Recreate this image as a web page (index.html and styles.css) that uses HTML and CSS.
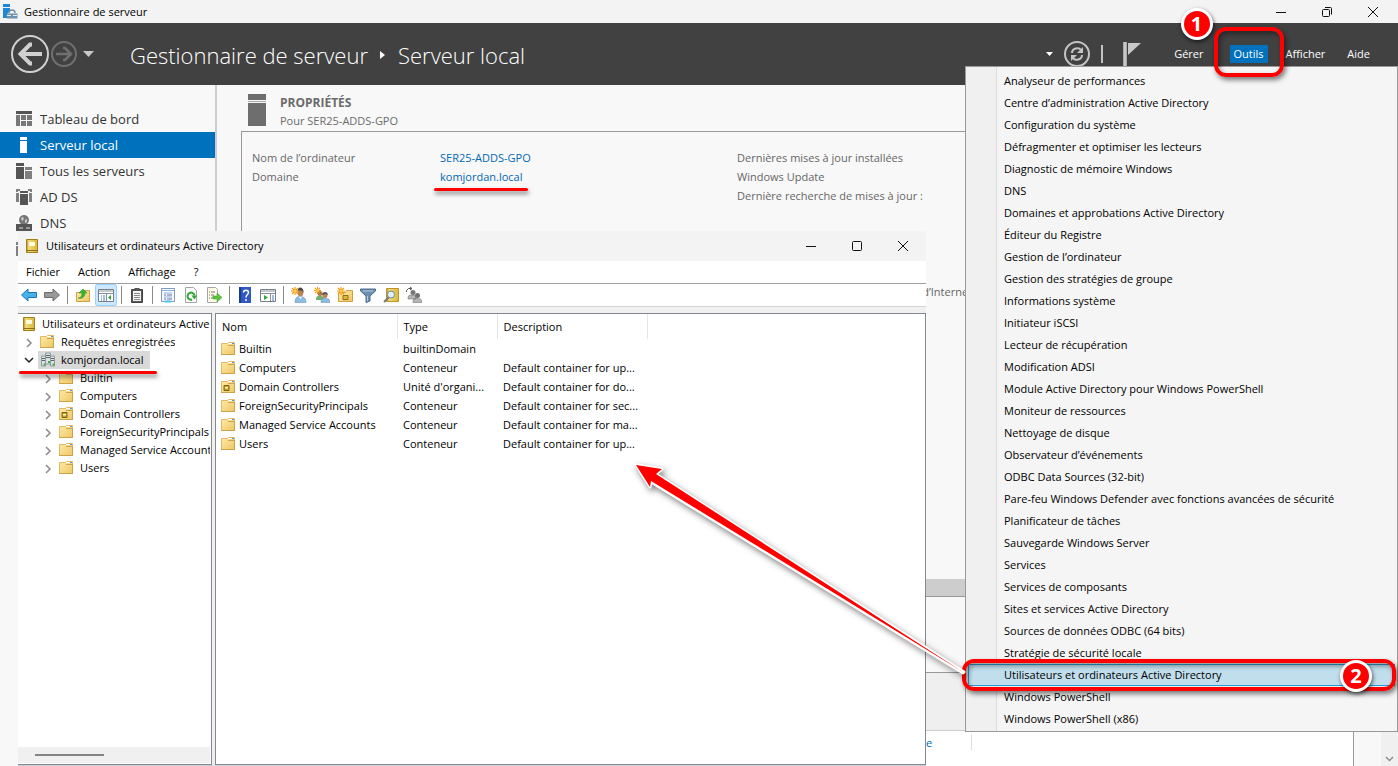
FILE: index.html
```html
<!DOCTYPE html>
<html lang="fr">
<head>
    <meta charset="UTF-8">
    <meta name="viewport" content="width=device-width, initial-scale=1.0">
    <title>Gestionnaire de serveur</title>
    <link rel="stylesheet" href="styles.css">
</head>
<body>
    <!-- Icônes partagées -->
    <svg class="defs" width="0" height="0">
        <defs>
            <linearGradient id="gold" x1="0" y1="0" x2="1" y2="1">
                <stop offset="0" stop-color="#ffeaa8"/>
                <stop offset="1" stop-color="#eec765"/>
            </linearGradient>
            <linearGradient id="book" x1="0" y1="0" x2="1" y2="0">
                <stop offset="0" stop-color="#b08a1c"/>
                <stop offset=".2" stop-color="#f3dc7c"/>
                <stop offset="1" stop-color="#d9b63c"/>
            </linearGradient>
            <symbol id="i-folder" viewBox="0 0 16 16">
                <path d="M.5 2.500h6l1-1h6v12H.5z" fill="url(#gold)" stroke="#e0b966"/>
                <path d="M7 2.500h6" stroke="#fff"/>
                <path d="M11 2.500h2" stroke="#4a9be0"/>
                <path d="M7 4.500h7M0 13.500h14M13.500 4v10" stroke="#cda24c"/>
            </symbol>
            <symbol id="i-ou" viewBox="0 0 16 16">
                <use href="#i-folder"/>
                <path d="M3 6.500h5v5H3z" fill="#c9a227" stroke="#7d6414"/>
                <path d="M4 8h3v1.500H4z" fill="#fff6c4"/>
            </symbol>
            <symbol id="i-book" viewBox="0 0 16 16">
                <path d="M2.500 1.500h11v13h-11z" fill="url(#book)" stroke="#a37f1b"/>
                <path d="M5 4h6v4H5z" fill="#fffbe0"/>
                <path d="M3 12.500h11" stroke="#8d6c12" stroke-width="1"/>
            </symbol>
            <symbol id="i-domain" viewBox="0 0 16 16">
                <path d="M5.500 1h5v11h-5z" fill="#dbe3e5" stroke="#8d999d"/>
                <path d="M1.500 4h4v10h-4zM10.500 4h4v10h-4z" fill="#dbe3e5" stroke="#8d999d"/>
                <path d="M6 3.500h4M6 5.500h4M2 6.500h3M11 6.500h3M2 8.500h3M11 8.500h3" stroke="#59656a"/>
                <path d="M8 9h2v2H8zM3.500 11.500h2v2h-2zM12.500 11.500h2v2h-2z" fill="#3fb34a"/>
            </symbol>
            <symbol id="i-chev" viewBox="0 0 16 16">
                <path d="M6 5l4 4-4 4" fill="none" stroke="#8a8a8a" stroke-width="1.500"/>
            </symbol>
            <symbol id="i-star" viewBox="0 0 8 8">
                <path d="M4 0v8M0 4h8M1 1l6 6M7 1L1 7" stroke="#f09a12" stroke-width="1.200"/>
                <circle cx="4" cy="4" r="1.500" fill="#ffd45c"/>
            </symbol>
        </defs>
    </svg>

    <div class="app">
        <div class="titlebar">
            <svg class="icon" viewBox="0 0 16 16">
                <path d="M1 0h7v3H1z" fill="#1d86d6"/>
                <path d="M1 4h7v3L5 10v4H1z" fill="#1d86d6"/>
                <path d="M4.500 9.500h11v5h-11z" fill="#6f92ac"/>
                <path d="M7 9c0-4 6-4 6 0" fill="none" stroke="#6f92ac" stroke-width="1.500"/>
                <path d="M5 11.500h4M11 11.500h4" stroke="#e6eef4"/>
            </svg>
            <span>Gestionnaire de serveur</span>
            <div class="controls">
                <button aria-label="Réduire"><svg viewBox="0 0 12 12"><path d="M1 6.500h10"/></svg></button>
                <button aria-label="Restaurer"><svg viewBox="0 0 12 12"><rect x="1.500" y="3.500" width="7" height="7" rx="1"/><path d="M4 1.500h5.500a1 1 0 0 1 1 1V8.500"/></svg></button>
                <button aria-label="Fermer"><svg viewBox="0 0 12 12"><path d="M1 1l10 10M11 1L1 11"/></svg></button>
            </div>
        </div>

        <header class="banner">
            <div class="history">
                <button aria-label="Précédent"><svg width="38" height="38" viewBox="0 0 38 38"><circle cx="19" cy="19" r="18" fill="none" stroke="#d0d0d0" stroke-width="2"/><path d="M31 19H10M21 9.500h-2L9.500 19l9.500 9.500h2" fill="none" stroke="#d0d0d0" stroke-width="4"/></svg></button>
                <button aria-label="Suivant"><svg width="26" height="26" viewBox="0 0 26 26"><circle cx="13" cy="13" r="12" fill="none" stroke="#707070" stroke-width="2"/><path d="M5 13h14M12 7h2l6 6-6 6h-2" fill="none" stroke="#707070" stroke-width="2.500"/></svg></button>
                <button class="drop" aria-label="Historique"><svg width="11" height="6" viewBox="0 0 11 6"><path d="M0 0h11L5.500 6z" fill="#c8c8c8"/></svg></button>
            </div>
            <h1>Gestionnaire de serveur <svg width="6" height="10" viewBox="0 0 6 10"><path d="M0 1v8l5-4z" fill="#fff"/></svg> Serveur local</h1>
            <div class="tools">
                <svg width="7" height="4" viewBox="0 0 7 4"><path d="M0 0h7L3.500 4z" fill="#fff"/></svg>
                <button aria-label="Actualiser"><svg width="26" height="26" viewBox="0 0 26 26"><circle cx="13" cy="13" r="12" fill="none" stroke="#c4c4c4" stroke-width="2"/><path d="M8 12c0-5 7-6 9-3M18 14c0 5-7 6-9 3" fill="none" stroke="#c4c4c4" stroke-width="2"/><path d="M19 6v6h-6zM7 20v-6h6z" fill="#c4c4c4"/></svg></button>
                <span class="bar"></span>
                <button aria-label="Notifications"><svg width="18" height="24" viewBox="0 0 18 24"><path d="M0 0h4v24H0z" fill="#a8a8a8"/><path d="M1 0h2v24H1z" fill="#c8c8c8"/><path d="M5 1h13L5 13z" fill="#c8c8c8"/></svg></button>
            </div>
            <nav class="menubar">
                <button>Gérer</button>
                <button class="open">Outils<span class="mark"></span><span class="badge">1</span></button>
                <button>Afficher</button>
                <button>Aide</button>
            </nav>
        </header>

        <div class="body">
            <nav class="sidebar">
                <a href="#"><svg viewBox="0 0 16 16"><path d="M0 0h16v3H0z" fill="#555"/><path d="M0 4h4v11H0zM5 4h5v5H5zM11 4h5v5h-5zM5 10h5v5H5zM11 10h5v5h-5z" fill="#777"/></svg>Tableau de bord</a>
                <a href="#" class="active"><svg viewBox="0 0 16 16"><path d="M4 0h7v3H4zM4 4h7v12H4z" fill="#fff"/></svg>Serveur local</a>
                <a href="#"><svg viewBox="0 0 16 16"><path d="M0 0h8v3H0zM0 4h8v12H0z" fill="#555"/><path d="M9 4h7v3H9zM9 8h7v8H9z" fill="#808080"/></svg>Tous les serveurs</a>
                <a href="#"><svg viewBox="0 0 16 16"><path d="M0 0h4v2H2v1H0zM0 4h3v9H0zM12 0h4v3h-2V2h-2zM13 4h3v9h-3z" fill="#808080"/><path d="M4 2h8v2H4zM4 5h8v11H4z" fill="#555"/></svg>AD DS</a>
                <a href="#"><svg viewBox="0 0 16 16"><circle cx="8" cy="5" r="5" fill="#777"/><path d="M5 3l2-1 1 2-2 2zM9 5l2-1v3l-2 1z" fill="#ccc"/><path d="M0 9h16v3H0zM0 12h16v4H0z" fill="#555"/><path d="M3 13h4M10 13h4" stroke="#ddd"/></svg>DNS</a>
                <a href="#" aria-label="Services de fichiers"><svg viewBox="0 0 16 16"><path d="M0 1h7v3H0zM0 5h7v10H0z" fill="#808080"/></svg></a>
            </nav>

            <main class="content">
                <div class="heading">
                    <svg width="18" height="32" viewBox="0 0 18 32"><path d="M0 0h18v6H0zM0 9h18v23H0z" fill="#6e6e6e"/><path d="M0 7.500h18" stroke="#a8a8a8"/></svg>
                    <div>
                        <h2>PROPRIÉTÉS</h2>
                        <p>Pour SER25-ADDS-GPO</p>
                    </div>
                </div>
                <section class="properties">
                    <dl>
                        <dt>Nom de l’ordinateur</dt><dd><a href="#">SER25-ADDS-GPO</a></dd>
                        <dt>Domaine</dt><dd><a href="#" class="underlined">komjordan.local</a></dd>
                    </dl>
                    <div class="updates">
                        <p>Dernières mises à jour installées</p>
                        <p>Windows Update</p>
                        <p>Dernière recherche de mises à jour :</p>
                        <p class="group">Configuration de sécurité renforcée d’Internet Explorer</p>
                    </div>
                    <div class="hscroll"></div>
                </section>
                <div class="spacer"></div>
                <section class="events">
                    <div class="filters"></div>
                    <div class="rows"><a href="#">e</a></div>
                </section>
            </main>
            <div class="vscroll"><svg width="9" height="6" viewBox="0 0 9 6"><path d="M1 1l3.500 3.500L8 1" fill="none" stroke="#909090" stroke-width="1.500"/></svg></div>
        </div>

        <!-- Menu Outils -->
        <ul class="dropdown">
            <li><button>Analyseur de performances</button></li>
            <li><button>Centre d’administration Active Directory</button></li>
            <li><button>Configuration du système</button></li>
            <li><button>Défragmenter et optimiser les lecteurs</button></li>
            <li><button>Diagnostic de mémoire Windows</button></li>
            <li><button>DNS</button></li>
            <li><button>Domaines et approbations Active Directory</button></li>
            <li><button>Éditeur du Registre</button></li>
            <li><button>Gestion de l’ordinateur</button></li>
            <li><button>Gestion des stratégies de groupe</button></li>
            <li><button>Informations système</button></li>
            <li><button>Initiateur iSCSI</button></li>
            <li><button>Lecteur de récupération</button></li>
            <li><button>Modification ADSI</button></li>
            <li><button>Module Active Directory pour Windows PowerShell</button></li>
            <li><button>Moniteur de ressources</button></li>
            <li><button>Nettoyage de disque</button></li>
            <li><button>Observateur d’événements</button></li>
            <li><button>ODBC Data Sources (32-bit)</button></li>
            <li><button>Pare-feu Windows Defender avec fonctions avancées de sécurité</button></li>
            <li><button>Planificateur de tâches</button></li>
            <li><button>Sauvegarde Windows Server</button></li>
            <li><button>Services</button></li>
            <li><button>Services de composants</button></li>
            <li><button>Sites et services Active Directory</button></li>
            <li><button>Sources de données ODBC (64 bits)</button></li>
            <li><button>Stratégie de sécurité locale</button></li>
            <li class="selected"><button>Utilisateurs et ordinateurs Active Directory</button><span class="mark"></span><span class="badge">2</span></li>
            <li><button>Windows PowerShell</button></li>
            <li><button>Windows PowerShell (x86)</button></li>
        </ul>

        <!-- Fenêtre Utilisateurs et ordinateurs -->
        <div class="window">
            <div class="titlebar">
                <svg class="icon"><use href="#i-book"/></svg>
                <span>Utilisateurs et ordinateurs Active Directory</span>
                <div class="controls">
                    <button aria-label="Réduire"><svg viewBox="0 0 12 12"><path d="M1 6.500h10"/></svg></button>
                    <button aria-label="Agrandir"><svg viewBox="0 0 12 12"><rect x="1.500" y="1.500" width="9" height="9" rx="1"/></svg></button>
                    <button aria-label="Fermer"><svg viewBox="0 0 12 12"><path d="M1 1l10 10M11 1L1 11"/></svg></button>
                </div>
            </div>
            <nav class="winmenu">
                <button>Fichier</button>
                <button>Action</button>
                <button>Affichage</button>
                <button>?</button>
            </nav>
            <div class="toolbar">
                <button aria-label="Précédent"><svg viewBox="0 0 16 16"><path d="M.5 8L7 2v3.500h8.500v5H7V14z" fill="#45b2ea" stroke="#1b77b8"/></svg></button>
                <button aria-label="Suivant"><svg viewBox="0 0 16 16"><path d="M15.500 8L9 2v3.500H.5v5H9V14z" fill="#999" stroke="#6b6b6b"/></svg></button>
                <span class="sep"></span>
                <button aria-label="Dossier parent"><svg viewBox="0 0 16 16"><path d="M1.500 5.500h5l1-2h7v11h-13z" fill="url(#gold)" stroke="#cfa044"/><path d="M3 11c3 0 4-2 4-5H4l4-4 4 4h-2c0 4-3 6-7 5z" fill="#35b534" stroke="#1f8a24" stroke-width=".5"/></svg></button>
                <button class="on" aria-label="Arborescence"><svg viewBox="0 0 16 16"><path d="M.5 2.500h15v12H.5z" fill="#fff" stroke="#7a7f86"/><path d="M1 4h14M1 6.500h14" stroke="#8a9098"/><path d="M8.500 7v7" stroke="#8a9098"/><path d="M3 9h1M3 11h1M3 13h1M5 9h2M5 11h2M5 13h2" stroke="#3c7dc4"/><path d="M13 8v5l-3-2.500z" fill="#2fa834"/></svg></button>
                <span class="sep"></span>
                <button aria-label="Presse-papiers"><svg viewBox="0 0 16 16"><path d="M2.500 2.500h11v13h-11z" fill="#555" stroke="#444"/><path d="M4 4h8v10H4z" fill="#f4f4f4"/><path d="M5.500 1h5v3h-5z" fill="#555"/><path d="M5 6.500h6M5 8.500h6M5 10.500h6M5 12.500h6" stroke="#888"/></svg></button>
                <span class="sep"></span>
                <button aria-label="Propriétés"><svg viewBox="0 0 16 16"><path d="M1.500 1.500h13v13h-13z" fill="#f5f9fd" stroke="#7f9db9"/><path d="M2 3.500h12M4 6h8M4 10h8" stroke="#8fb3d9"/><path d="M4 8h2M7 8h5M4 12h2M7 12h5" stroke="#66a"/><path d="M5 14.500h6" stroke="#3fc4f0" stroke-width="2"/></svg></button>
                <button aria-label="Actualiser"><svg viewBox="0 0 16 16"><path d="M2.500.5h8l3 3v12h-11z" fill="#fafafa" stroke="#a6a6a6"/><path d="M9 12.500a3.500 3.500 0 1 1 2.500-4" fill="none" stroke="#2fa834" stroke-width="2"/><path d="M8.500 8.500h5.500l-2.500 4z" fill="#2fa834"/></svg></button>
                <button aria-label="Exporter"><svg viewBox="0 0 16 16"><path d="M1.500.5h8l2 2v13h-10z" fill="#fffbe6" stroke="#a6a6a6"/><path d="M3 5h6M3 8h5M3 11h5" stroke="#777" stroke-dasharray="1 1 4"/><path d="M7 9h4V6l5 4.500L11 15v-3H7z" fill="#5ac43c" stroke="#3a9c28" stroke-width=".5"/></svg></button>
                <span class="sep"></span>
                <button aria-label="Aide"><svg viewBox="0 0 16 16"><path d="M2 0h12v16H2z" fill="#2f58c4"/><path d="M2 0h2v16H2z" fill="#1c3a90"/><path d="M6.500 5.500c0-3 5-3 5 0 0 2-2.500 2-2.500 5M9 12v2" fill="none" stroke="#fff" stroke-width="1.500"/></svg></button>
                <button aria-label="Volet Actions"><svg viewBox="0 0 16 16"><path d="M.5 2.500h15v12H.5z" fill="#fff" stroke="#7a7f86"/><path d="M1 4h14M1 6.500h14M10.500 7v7" stroke="#8a9098"/><path d="M12 9h2M12 11h2M12 13h2" stroke="#3c7dc4"/><path d="M4 8v5l4-2.500z" fill="#2fa834"/></svg></button>
                <span class="sep"></span>
                <button aria-label="Nouvel utilisateur"><svg viewBox="0 0 16 16"><path d="M4 15.500c0-5 2-6 5-6 4 0 6 2 6 6z" fill="#8dbce0" stroke="#5c8db8" stroke-width=".5"/><path d="M8 9.500l1.500 3L11 9.500z" fill="#fff"/><ellipse cx="9.500" cy="5.500" rx="2.800" ry="4" fill="#b98455"/><path d="M6.500 5C6-1 13-1 12.500 6L11 3.500H8z" fill="#444"/><use href="#i-star" width="8" height="8"/></svg></button>
                <button aria-label="Nouveau groupe"><svg viewBox="0 0 16 16"><path d="M2 13c0-4 1-4 4-4 3 0 4 1 4 4z" fill="#6fb06c"/><circle cx="6" cy="6.500" r="2.500" fill="#a97748"/><path d="M7 15.500c0-4 1-4 4-4 4 0 5 1 5 4z" fill="#8dbce0" stroke="#5c8db8" stroke-width=".5"/><circle cx="11" cy="8.500" r="2.500" fill="#b98455"/><path d="M8 8c0-4 6-4 6 0l-2-1z" fill="#555"/><use href="#i-star" width="7" height="7"/></svg></button>
                <button aria-label="Nouvelle unité"><svg viewBox="0 0 16 16"><path d="M1.500 5.500h7l1-2h6v11h-14z" fill="url(#gold)" stroke="#cfa044"/><path d="M6 8.500h5v4H6z" fill="#e0b840" stroke="#8d6c12"/><use href="#i-star" width="8" height="8"/></svg></button>
                <button aria-label="Filtrer"><svg viewBox="0 0 16 16"><path d="M.5 2h15v2L10 9v5l-4 1.500V9L.5 4z" fill="#6c8fae" stroke="#4b6c8c"/><path d="M3 4h10" stroke="#b9cfe2"/><path d="M7.500 9v5" stroke="#b9cfe2"/></svg></button>
                <button aria-label="Rechercher"><svg viewBox="0 0 16 16"><path d="M3.500 1.500h12v13h-12z" fill="url(#book)" stroke="#b8962a"/><path d="M6 10l-5 5" stroke="#777" stroke-width="2"/><circle cx="8" cy="7.500" r="3.500" fill="#dff0fb" stroke="#6f8799"/></svg></button>
                <button aria-label="Ajouter au groupe"><svg viewBox="0 0 16 16"><path d="M2 12c0-4 1-4 4-4 3 0 4 1 4 4zM7 15.500c0-4 1-4 4-4 4 0 5 1 5 4z" fill="#b5b5b5" stroke="#666" stroke-width=".5"/><circle cx="7" cy="5.500" r="2.500" fill="#777"/><circle cx="11.500" cy="8.500" r="2.500" fill="#707070"/><path d="M.5 5V3.500l2-2h3M4 0l2 1.500L4 3" fill="none" stroke="#555"/></svg></button>
            </div>

            <div class="panes">
                <div class="tree">
                    <ul>
                        <li><svg><use href="#i-book"/></svg><span>Utilisateurs et ordinateurs Active Directory</span></li>
                        <li><svg><use href="#i-chev"/></svg><svg><use href="#i-folder"/></svg><span>Requêtes enregistrées</span></li>
                        <li class="current"><svg viewBox="0 0 16 16"><path d="M4 6l4 4 4-4" fill="none" stroke="#222" stroke-width="1.500"/></svg><div class="pick"><svg><use href="#i-domain"/></svg><span>komjordan.local</span></div></li>
                        <li class="child"><svg><use href="#i-chev"/></svg><svg><use href="#i-folder"/></svg><span>Builtin</span></li>
                        <li class="child"><svg><use href="#i-chev"/></svg><svg><use href="#i-folder"/></svg><span>Computers</span></li>
                        <li class="child"><svg><use href="#i-chev"/></svg><svg><use href="#i-ou"/></svg><span>Domain Controllers</span></li>
                        <li class="child"><svg><use href="#i-chev"/></svg><svg><use href="#i-folder"/></svg><span>ForeignSecurityPrincipals</span></li>
                        <li class="child"><svg><use href="#i-chev"/></svg><svg><use href="#i-folder"/></svg><span>Managed Service Accounts</span></li>
                        <li class="child"><svg><use href="#i-chev"/></svg><svg><use href="#i-folder"/></svg><span>Users</span></li>
                    </ul>
                    <div class="track"><div class="thumb"></div></div>
                </div>
                <div class="list">
                    <table>
                        <thead>
                            <tr><th class="name">Nom</th><th class="type">Type</th><th class="desc">Description</th></tr>
                        </thead>
                        <tbody>
                            <tr><td><svg><use href="#i-folder"/></svg>Builtin</td><td>builtinDomain</td><td></td></tr>
                            <tr><td><svg><use href="#i-folder"/></svg>Computers</td><td>Conteneur</td><td>Default container for up...</td></tr>
                            <tr><td><svg><use href="#i-ou"/></svg>Domain Controllers</td><td>Unité d'organi...</td><td>Default container for do...</td></tr>
                            <tr><td><svg><use href="#i-folder"/></svg>ForeignSecurityPrincipals</td><td>Conteneur</td><td>Default container for sec...</td></tr>
                            <tr><td><svg><use href="#i-folder"/></svg>Managed Service Accounts</td><td>Conteneur</td><td>Default container for ma...</td></tr>
                            <tr><td><svg><use href="#i-folder"/></svg>Users</td><td>Conteneur</td><td>Default container for up...</td></tr>
                        </tbody>
                    </table>
                </div>
            </div>
        </div>

        <svg class="arrow" width="340" height="230" viewBox="0 0 340 230">
            <path d="M6 5L32 9L26 14L334 212L333 213L21 22L20 27z" fill="#fff" stroke="#fff" stroke-width="3" stroke-linejoin="round"/>
            <path d="M6 5L32 9L26 14L333 212L21 21L20 27z" fill="#f00"/>
        </svg>
    </div>
</body>
</html>
```
FILE: styles.css
```css
* {
    box-sizing: border-box;
}
body {
    margin: 0;
    font-family: "Open Sans", "Noto Sans", sans-serif;
    font-size: 11px;
    line-height: 18px;
    color: #000;
}
h1, h2, p, ul, dl, dd {
    margin: 0;
    padding: 0;
}
ul {
    list-style: none;
}
a {
    color: #0068b5;
    text-decoration: none;
}
button {
    padding: 0;
    border: 0;
    background: none;
    font: inherit;
    color: inherit;
    white-space: nowrap;
}
svg {
    display: block;
    flex: none;
}
.defs {
    position: absolute;
}
.app {
    position: relative;
    height: 100vh;
    display: flex;
    flex-direction: column;
    overflow: hidden;
    background: #f8f8f8;
}

/* barre de titre */
.titlebar {
    display: flex;
    align-items: center;
    height: 23px;
    padding-left: 2px;
    background: #f3f3f3;
}
.titlebar .icon {
    width: 16px;
    height: 16px;
    margin-right: 6px;
}
.controls {
    display: flex;
    margin-left: auto;
    padding-right: 2px;
}
.controls button {
    width: 46px;
    display: flex;
    justify-content: center;
}
.controls svg {
    width: 12px;
    height: 12px;
    fill: none;
    stroke: #111;
}

/* bandeau */
.banner {
    display: flex;
    align-items: center;
    height: 62px;
    flex: none;
    padding: 0 24px 0 11px;
    background: #414141;
    color: #fff;
}
.history {
    display: flex;
    align-items: center;
    gap: 2px;
    width: 119px;
}
.history .drop {
    margin-left: 4px;
}
h1 {
    display: flex;
    align-items: center;
    gap: 12px;
    padding-top: 2px;
    font-size: 22px;
    font-weight: 300;
    line-height: 32px;
    white-space: nowrap;
}
.tools {
    display: flex;
    align-items: center;
    gap: 11px;
    margin-left: auto;
}
.tools .bar {
    width: 2px;
    height: 18px;
    background: #c4c4c4;
}
.tools button:last-child {
    margin-left: 9px;
}
.menubar {
    display: flex;
    gap: 14px;
    margin-left: 29px;
}
.menubar button {
    position: relative;
    padding: 0 4px;
}
.menubar .open {
    margin-left: 8px;
    background: #0071bc;
}

/* repères rouges */
.mark {
    position: absolute;
    z-index: 20;
    border: 4px solid #f00;
    border-radius: 12px;
    box-shadow: 2px 3px 5px rgba(0, 0, 0, .5), inset 2px 3px 5px rgba(0, 0, 0, .4);
}
.open .mark {
    inset: -18px -16px -14px;
}
.badge {
    position: absolute;
    z-index: 21;
    width: 32px;
    height: 32px;
    border: 3px solid #fff;
    border-radius: 50%;
    background: #f00;
    box-shadow: 1px 2px 4px rgba(0, 0, 0, .6);
    color: #fff;
    font-size: 20px;
    font-weight: 700;
    line-height: 26px;
    text-align: center;
}
.open .badge {
    left: -49px;
    top: -37px;
}
.arrow {
    position: absolute;
    z-index: 15;
    right: 428px;
    top: 460px;
    filter: drop-shadow(2px 3px 3px rgba(0, 0, 0, .5));
}
.underlined, .current {
    position: relative;
}
.underlined::after, .current::after {
    content: "";
    position: absolute;
    height: 3px;
    border-radius: 2px;
    background: #f00;
    box-shadow: 1px 3px 4px rgba(0, 0, 0, .5);
}
.underlined::after {
    left: -6px;
    right: -5px;
    bottom: -7px;
}
.current::after {
    left: 1px;
    width: 138px;
    bottom: -5px;
}

/* corps */
.body {
    flex: 1;
    display: flex;
    min-height: 0;
}
.sidebar {
    width: 217px;
    flex: none;
    padding-top: 21px;
    border-right: 2px solid #cdcdcd;
    overflow: hidden;
}
.sidebar a {
    display: flex;
    align-items: center;
    gap: 8px;
    height: 26px;
    padding-left: 16px;
    font-size: 13px;
    line-height: 26px;
    color: #333;
    white-space: nowrap;
}
.sidebar svg {
    width: 16px;
    height: 16px;
}
.sidebar .active {
    background: #0071bc;
    color: #fff;
}
.content {
    flex: 1;
    display: flex;
    flex-direction: column;
    min-width: 0;
    padding: 9px 27px 0 24px;
}
.heading {
    display: flex;
    gap: 14px;
    height: 37px;
    padding-left: 7px;
    color: #6b6b6b;
}
.heading h2 {
    font-size: 12px;
    line-height: 18px;
}
.properties {
    display: grid;
    grid-template-columns: 485px 1fr;
    grid-template-rows: 1fr 17px;
    height: 466px;
    flex: none;
    border: 1px solid #999;
    color: #666;
    line-height: 19px;
}
.properties dl {
    display: grid;
    grid-template-columns: 188px 1fr;
    align-content: start;
    padding: 16px 0 0 10px;
}
.updates {
    padding: 16px 0 0 10px;
    white-space: nowrap;
    overflow: hidden;
}
.updates .group {
    margin-top: 77px;
}
.hscroll {
    grid-column: 1 / 3;
    background: #cdcdcd;
}
.spacer {
    height: 75px;
    flex: none;
}
.events {
    flex: 1;
    display: flex;
    flex-direction: column;
    border: 1px solid #999;
    border-bottom: 0;
}
.filters {
    height: 58px;
    background: #efefef;
    border-bottom: 1px solid #ccc;
}
.rows {
    flex: 1;
    padding-top: 3px;
    background: #fff;
}
.rows a {
    display: block;
    width: 730px;
    height: 16px;
    padding-left: 684px;
    border-right: 1px solid #ddd;
}
.vscroll {
    width: 17px;
    display: flex;
    align-items: flex-end;
    justify-content: center;
    padding-bottom: 4px;
    background: #f0f0f0;
}

/* menu déroulant */
.dropdown {
    position: absolute;
    z-index: 10;
    top: 66px;
    right: 0;
    width: 433px;
    padding: 3px 2px 1px;
    border: 1px solid #999;
    background: linear-gradient(90deg, #f0f0f0 30px, #ddd 30px, #ddd 31px, #f5f5f5 31px);
}
.dropdown li {
    position: relative;
    height: 22px;
}
.dropdown button {
    width: 100%;
    height: 22px;
    padding-left: 36px;
    text-align: left;
}
.dropdown .selected {
    border: 1px solid #26a0da;
    background: #c0deec;
}
.dropdown .selected button {
    height: 20px;
    padding-left: 35px;
}
.selected .mark {
    inset: -6px -2px -6px -7px;
}
.selected .badge {
    right: 22px;
    top: -5px;
}

/* fenêtre */
.window {
    position: absolute;
    left: 18px;
    right: 472px;
    top: 231px;
    bottom: 1px;
    display: flex;
    flex-direction: column;
    background: #f0f0f0;
    box-shadow: 0 1px 0 #ccd3da;
}
.window .titlebar {
    height: 30px;
    padding-left: 6px;
}
.window .controls {
    padding: 0;
}
.winmenu {
    display: flex;
    gap: 18px;
    height: 22px;
    padding-left: 8px;
    background: #fff;
}
.toolbar {
    display: flex;
    align-items: center;
    gap: 1px;
    height: 24px;
    border-top: 1px solid #a0a0a0;
    border-bottom: 1px solid #d4d4d4;
    background: #fff;
}
.toolbar button {
    width: 22px;
    height: 22px;
    padding: 3px;
}
.toolbar svg {
    width: 16px;
    height: 16px;
}
.toolbar .on {
    border-radius: 3px;
    background: #cce8ff;
    box-shadow: inset 0 0 0 1px #99d1ff;
}
.toolbar .sep {
    width: 1px;
    height: 18px;
    margin: 0 3px;
    background: #8a8a8a;
}
.panes {
    flex: 1;
    display: flex;
    gap: 3px;
    min-height: 0;
    padding-top: 6px;
}
.tree {
    width: 194px;
    display: flex;
    flex-direction: column;
    border: 1px solid #828790;
    border-left: 0;
    background: #fff;
}
.tree ul {
    flex: 1;
    padding: 1px 1px 0 0;
}
.tree li {
    display: flex;
    align-items: center;
    gap: 3px;
    height: 18px;
    padding-left: 3px;
    white-space: nowrap;
}
.tree li > span {
    overflow: hidden;
    margin-left: 2px;
}
.tree svg {
    width: 16px;
    height: 16px;
}
.tree .child {
    padding-left: 22px;
}
.pick {
    display: flex;
    align-items: center;
    gap: 5px;
    padding: 0 6px 0 2px;
    margin-left: -2px;
    background: #d9d9d9;
}
.track {
    height: 16px;
    margin: 0 1px 1px 0;
    padding: 7px 17px;
    background: #f0f0f0;
}
.thumb {
    width: 69px;
    height: 2px;
    background: #858585;
}
.list {
    flex: 1;
    min-width: 0;
    border: 1px solid #828790;
    background: #fff;
}
table {
    width: 431px;
    table-layout: fixed;
    border-collapse: collapse;
}
.name {
    width: 181px;
}
.type {
    width: 100px;
}
.desc {
    width: 150px;
}
th {
    height: 25px;
    padding: 0 6px;
    border-right: 1px solid #e5e5e5;
    font-weight: 400;
    text-align: left;
}
td {
    height: 19px;
    padding: 0 0 0 6px;
    white-space: nowrap;
}
td:first-child {
    display: flex;
    align-items: center;
    gap: 2px;
    padding-left: 5px;
}
td svg {
    width: 16px;
    height: 16px;
}
```
